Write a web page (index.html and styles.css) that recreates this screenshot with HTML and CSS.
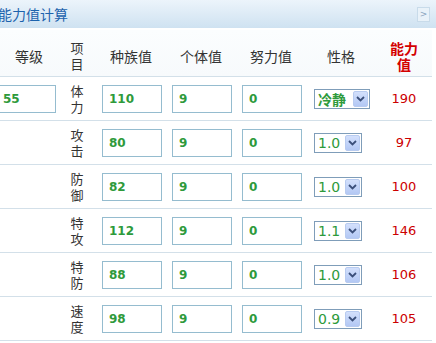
FILE: index.html
```html
<!DOCTYPE html>
<html lang="zh-CN">
<head>
  <meta charset="UTF-8" />
  <title>能力值计算</title>
  <link rel="stylesheet" href="styles.css">
</head>
<body>
  <div class="panel">
    <div class="title-bar">
      <h2>能力值计算</h2>
      <span class="more">&gt;</span>
    </div>
    <div class="row head">
      <div>等级</div>
      <div class="stack">项<br>目</div>
      <div>种族值</div>
      <div>个体值</div>
      <div>努力值</div>
      <div>性格</div>
      <div class="stack total-head">能力<br>值</div>
    </div>
    <div class="row">
      <div class="lv"><input type="text" value="55"></div>
      <div class="stack">体<br>力</div>
      <div class="cell"><input type="text" value="110"></div>
      <div class="cell"><input type="text" value="9"></div>
      <div class="cell"><input type="text" value="0"></div>
      <div class="cell"><div class="sel wide"><span class="txt bold">冷静</span><span class="btn"><svg width="9" height="6" viewBox="0 0 9 6"><path d="M1 1l3.5 3.5L8 1" fill="none" stroke="#3b4f7a" stroke-width="1.8"/></svg></span></div></div>
      <div class="total">190</div>
    </div>
    <div class="row">
      <div></div>
      <div class="stack">攻<br>击</div>
      <div class="cell"><input type="text" value="80"></div>
      <div class="cell"><input type="text" value="9"></div>
      <div class="cell"><input type="text" value="0"></div>
      <div class="cell"><div class="sel"><span class="txt">1.0</span><span class="btn"><svg width="9" height="6" viewBox="0 0 9 6"><path d="M1 1l3.5 3.5L8 1" fill="none" stroke="#3b4f7a" stroke-width="1.8"/></svg></span></div></div>
      <div class="total">97</div>
    </div>
    <div class="row">
      <div></div>
      <div class="stack">防<br>御</div>
      <div class="cell"><input type="text" value="82"></div>
      <div class="cell"><input type="text" value="9"></div>
      <div class="cell"><input type="text" value="0"></div>
      <div class="cell"><div class="sel"><span class="txt">1.0</span><span class="btn"><svg width="9" height="6" viewBox="0 0 9 6"><path d="M1 1l3.5 3.5L8 1" fill="none" stroke="#3b4f7a" stroke-width="1.8"/></svg></span></div></div>
      <div class="total">100</div>
    </div>
    <div class="row">
      <div></div>
      <div class="stack">特<br>攻</div>
      <div class="cell"><input type="text" value="112"></div>
      <div class="cell"><input type="text" value="9"></div>
      <div class="cell"><input type="text" value="0"></div>
      <div class="cell"><div class="sel"><span class="txt">1.1</span><span class="btn"><svg width="9" height="6" viewBox="0 0 9 6"><path d="M1 1l3.5 3.5L8 1" fill="none" stroke="#3b4f7a" stroke-width="1.8"/></svg></span></div></div>
      <div class="total">146</div>
    </div>
    <div class="row">
      <div></div>
      <div class="stack">特<br>防</div>
      <div class="cell"><input type="text" value="88"></div>
      <div class="cell"><input type="text" value="9"></div>
      <div class="cell"><input type="text" value="0"></div>
      <div class="cell"><div class="sel"><span class="txt">1.0</span><span class="btn"><svg width="9" height="6" viewBox="0 0 9 6"><path d="M1 1l3.5 3.5L8 1" fill="none" stroke="#3b4f7a" stroke-width="1.8"/></svg></span></div></div>
      <div class="total">106</div>
    </div>
    <div class="row">
      <div></div>
      <div class="stack">速<br>度</div>
      <div class="cell"><input type="text" value="98"></div>
      <div class="cell"><input type="text" value="9"></div>
      <div class="cell"><input type="text" value="0"></div>
      <div class="cell"><div class="sel"><span class="txt">0.9</span><span class="btn"><svg width="9" height="6" viewBox="0 0 9 6"><path d="M1 1l3.5 3.5L8 1" fill="none" stroke="#3b4f7a" stroke-width="1.8"/></svg></span></div></div>
      <div class="total">105</div>
    </div>
  </div>
</body>
</html>
```

FILE: styles.css
```css
body {
  margin: 0;
  background: #fff;
  font-family: "Noto Sans CJK SC", "DejaVu Sans", sans-serif;
  color: #333;
  overflow: hidden;
}
.panel {
  width: 436px;
}
.title-bar {
  height: 28px;
  display: flex;
  align-items: center;
  justify-content: space-between;
  background: linear-gradient(to bottom, #ecf4fb, #cfe2f1);
  border-bottom: 2px solid #fff;
}
.title-bar h2 {
  margin: 0 0 0 -2px;
  font-size: 14px;
  font-weight: normal;
  color: #1d63ad;
  line-height: 28px;
}
.more {
  width: 11px;
  height: 13px;
  margin-right: 6px;
  border: 1px solid #c8dbea;
  background: #e9f2f9;
  color: #8aa4bd;
  font-family: "DejaVu Sans", sans-serif;
  font-size: 9px;
  line-height: 13px;
  text-align: center;
}
.row {
  width: 432px;
  display: grid;
  grid-template-columns: 58px 38px 70px 70px 70px 70px 56px;
  align-items: center;
  height: 43px;
  border-bottom: 1px solid #d3e0e9;
  font-size: 14px;
}
.row.head {
  box-sizing: border-box;
  height: 47px;
  padding-top: 5px;
  background: linear-gradient(to bottom, #fbfdfe, #f7fafc);
  text-align: center;
}
.stack {
  font-size: 13px;
  line-height: 16px;
  text-align: center;
}
.total-head {
  font-size: 14px;
  color: #d40000;
  font-weight: bold;
}
.lv input {
  margin-left: -4px;
}
.cell {
  padding-left: 6px;
}
input {
  display: block;
  box-sizing: border-box;
  width: 60px;
  height: 28px;
  margin: 0;
  padding: 0 0 0 6px;
  border: 1px solid #95bccf;
  background: #fff;
  color: #2e9a3b;
  font-family: "DejaVu Sans", sans-serif;
  font-size: 12px;
  font-weight: bold;
  outline: none;
}
.sel {
  margin-left: 2px;
  box-sizing: border-box;
  width: 48px;
  height: 20px;
  border: 1px solid #7f9db9;
  background: #fff;
  display: flex;
  align-items: center;
  justify-content: space-between;
  padding: 1px;
}
.sel.wide {
  width: 56px;
}
.sel .txt {
  color: #2e9a3b;
  font-family: "DejaVu Sans", sans-serif;
  font-size: 14px;
  padding-left: 2px;
  line-height: 16px;
}
.sel .txt.bold {
  font-family: "Noto Sans CJK SC", sans-serif;
  font-weight: bold;
  font-size: 14px;
}
.sel .btn {
  width: 15px;
  height: 16px;
  border-radius: 2px;
  background: linear-gradient(to bottom, #d3e0fc, #b3c8f4);
  border: 1px solid #b8cbf0;
  box-sizing: border-box;
  display: flex;
  align-items: center;
  justify-content: center;
}
.total {
  text-align: center;
  color: #cc0000;
  font-family: "DejaVu Sans", sans-serif;
  font-size: 13px;
}
```
